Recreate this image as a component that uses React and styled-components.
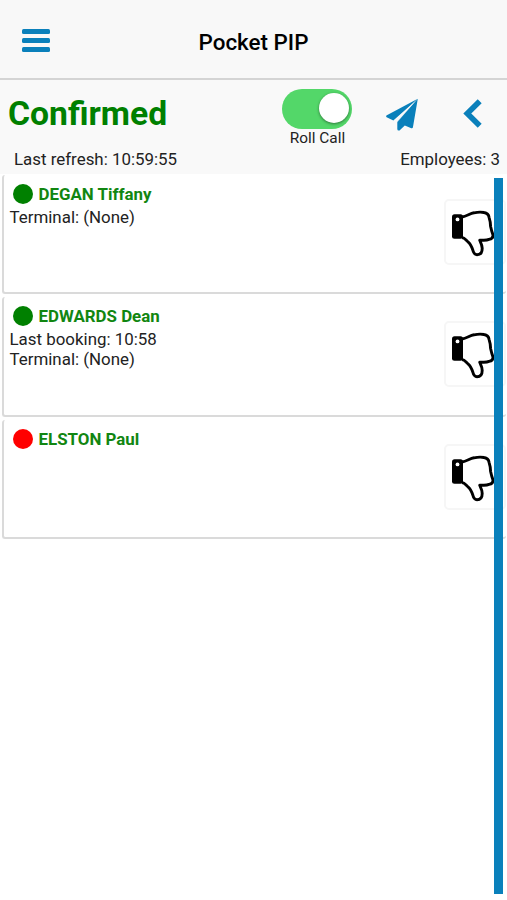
import React from 'react';
import styled, { createGlobalStyle } from 'styled-components';

const GlobalStyle = createGlobalStyle`
  * {
    box-sizing: border-box;
  }

  body {
    margin: 0;
    background-color: #fff;
    color: #222;
    font-family: Roboto, sans-serif;
    font-size: 16.9px;
  }
`;

const Screen = styled.div`
  position: relative;
  height: 900px;
  overflow: hidden;
`;

const TopBar = styled.header`
  display: grid;
  grid-template-columns: 72px 1fr 72px;
  align-items: center;
  height: 80px;
  padding-top: 4px;
  background-color: #f8f8f8;
  border-bottom: 2px solid #d4d4d4;
`;

const MenuButton = styled.button`
  display: flex;
  flex-direction: column;
  gap: 4px;
  width: 28px;
  margin: -2px 0 0 22px;
  padding: 0;
  border: none;
  background: none;
`;

const MenuLine = styled.span`
  height: 5px;
  border-radius: 1.5px;
  background-color: #0a80bb;
`;

const Title = styled.h1`
  margin: 2px 0 0;
  color: #000;
  font-size: 22.4px;
  font-weight: 500;
  line-height: 28px;
  text-align: center;
`;

const SubHeader = styled.section`
  height: 94px;
  background-color: #f9f9f9;
`;

const Controls = styled.div`
  display: flex;
  height: 67px;
`;

const Status = styled.h2`
  width: 282px;
  margin: 0;
  padding: 14px 0 0 8px;
  color: #008000;
  font-size: 33.7px;
  font-weight: 700;
  line-height: 40px;
`;

const RollCall = styled.div`
  display: flex;
  flex-direction: column;
  align-items: center;
  width: 71px;
  padding-top: 9px;
  font-size: 15.4px;
  line-height: 18px;
`;

const Toggle = styled.div`
  display: flex;
  justify-content: flex-end;
  align-self: flex-start;
  width: 70px;
  height: 40px;
  padding: 4px 3px;
  border-radius: 20px;
  background-color: #53d769;
`;

const Knob = styled.div`
  width: 30px;
  height: 30px;
  border-radius: 50%;
  background-color: #fff;
  box-shadow: 0 1px 3px rgba(0, 0, 0, 0.45);
`;

const SendIcon = styled.svg`
  width: 34px;
  height: 34px;
  margin: 17px 0 0 32px;
  fill: #0a80bb;
`;

const BackIcon = styled.svg`
  width: 22px;
  height: 32px;
  margin: 18px 0 0 42px;
  fill: none;
  stroke: #0a80bb;
  stroke-width: 5.6;
`;

const Summary = styled.div`
  display: flex;
  justify-content: space-between;
  padding: 2px 7px 0 14px;
  line-height: 20px;
`;

const List = styled.main`
  display: flex;
  flex-direction: column;
  gap: 3px;
  padding: 1px 1px 0 2px;
`;

const Card = styled.article`
  display: flex;
  justify-content: space-between;
  height: 119.3px;
  border: solid #dadada;
  border-width: 0 0 2px 2px;
  border-radius: 3px;
  background-color: #fff;
`;

const Details = styled.div`
  padding: 9px 0 0 5.5px;
  line-height: 20px;
`;

const NameRow = styled.div`
  display: flex;
  align-items: center;
  gap: 6px;
  height: 20px;
  margin-bottom: 3px;
  padding-left: 3px;
  color: #118611;
  font-size: 16.9px;
  font-weight: 700;
`;

const Dot = styled.span`
  width: 20px;
  height: 20px;
  border-radius: 50%;
  background-color: ${(props) => (props.$present ? '#008000' : '#f00')};
`;

const VoteButton = styled.button`
  width: 62px;
  height: 66px;
  margin-top: 24px;
  padding: 0;
  border: 2px solid #f6f6f6;
  border-radius: 5px;
  background: none;
`;

const ThumbIcon = styled.svg`
  display: block;
  width: 50px;
  height: 54px;
  margin: 2px 0 0 3px;
`;

const ScrollBar = styled.div`
  position: absolute;
  top: 178px;
  right: 4px;
  width: 9px;
  height: 716px;
  background-color: #0a80bb;
`;

const employees = [
  { name: 'DEGAN Tiffany', present: true, lines: ['Terminal: (None)'] },
  { name: 'EDWARDS Dean', present: true, lines: ['Last booking: 10:58', 'Terminal: (None)'] },
  { name: 'ELSTON Paul', present: false, lines: [] },
];

const ThumbDown = () => (
  <ThumbIcon viewBox="449 206 50 54">
    <path
      d="M462 217C467 216 470 213.4 474 212.8C478 212 481 211.9 484 212.5C487.5 213 488.7 214.5 489.1 217.5L490.2 222L490.6 226.5L491.7 231L493 235C493.2 237.6 491.5 239 489 239.4C486 240.8 483 240 479.7 240.2C481 243 482.3 245.5 482.2 248.5C482.2 252.5 480.2 254.7 477 254.7C474.2 254.7 473.5 253 472.8 250C471.7 246.5 470.5 243.8 468 241.8C465.5 239.5 464.5 237.7 462 237.5"
      fill="#fff"
      stroke="#000"
      strokeWidth="2.9"
      strokeLinejoin="round"
    />
    <rect x="452" y="214.3" width="11" height="24.4" rx="2.5" fill="#000" />
    <circle cx="457.5" cy="219.4" r="1.9" fill="#fff" />
  </ThumbIcon>
);

const Employee = ({ name, present, lines }) => (
  <Card>
    <Details>
      <NameRow>
        <Dot $present={present} />
        {name}
      </NameRow>
      {lines.map((line) => (
        <div key={line}>{line}</div>
      ))}
    </Details>
    <VoteButton aria-label="Not confirmed">
      <ThumbDown />
    </VoteButton>
  </Card>
);

const App = () => (
  <Screen>
    <GlobalStyle />
    <TopBar>
      <MenuButton aria-label="Menu">
        <MenuLine />
        <MenuLine />
        <MenuLine />
      </MenuButton>
      <Title>Pocket PIP</Title>
    </TopBar>
    <SubHeader>
      <Controls>
        <Status>Confirmed</Status>
        <RollCall>
          <Toggle>
            <Knob />
          </Toggle>
          Roll Call
        </RollCall>
        <SendIcon viewBox="385 97 34 34">
          <path d="M417.8 98.8L386.4 115.6Q385.6 116.7 386.6 117.3L393.4 120.6Z" />
          <path d="M417.8 98.8L412.9 127.6Q412.4 128.7 411.3 128.2L404.8 125.6L399.5 130.4Q397.4 131 397.3 129L397.3 121.4Z" />
          <path d="M415.6 101L393.6 120.6L397.4 122.2Z" fill="#f9f9f9" fillOpacity="0.55" />
        </SendIcon>
        <BackIcon viewBox="461 98 22 32">
          <path d="M479.7 101.3L467.3 113.6L479.7 125.8" />
        </BackIcon>
      </Controls>
      <Summary>
        <span>Last refresh: 10:59:55</span>
        <span>Employees: 3</span>
      </Summary>
    </SubHeader>
    <List>
      {employees.map((employee) => (
        <Employee key={employee.name} {...employee} />
      ))}
    </List>
    <ScrollBar />
  </Screen>
);

export default App;
